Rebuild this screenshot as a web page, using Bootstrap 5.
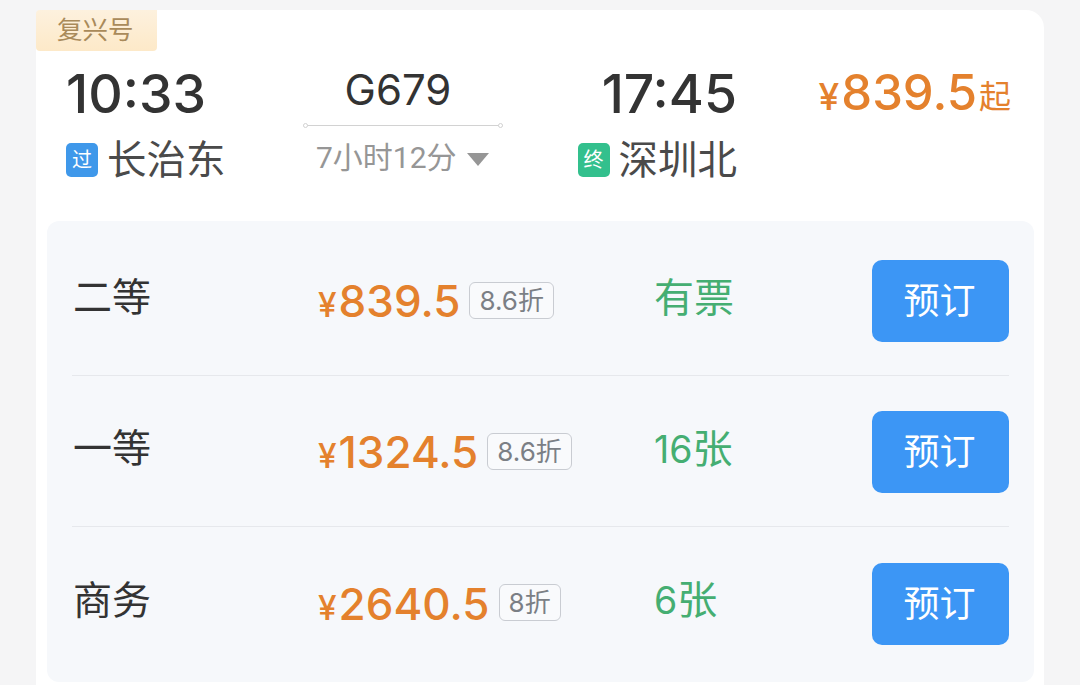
<!DOCTYPE html>
<html lang="zh-CN">
<head>
<meta charset="utf-8">
<title>G679</title>
<link rel="stylesheet" href="https://cdn.jsdelivr.net/npm/bootstrap@5.3.0/dist/css/bootstrap.min.css">
<style>
html,body{height:685px;overflow:hidden}
body{background:#f5f5f6;font-family:Inter,"Noto Sans CJK SC",sans-serif;color:#333}
.sheet{margin:10px 36px 0;width:1008px;height:690px;background:#fff;border-radius:18px 18px 0 0;position:relative}
.ribbon{position:absolute;left:0;top:0;width:121px;height:41px;background:linear-gradient(180deg,#fdf1de,#fde9c8);color:#a98a5a;font-size:25.5px;line-height:40px;padding-left:21px;border-radius:4px 0 4px 4px}
.head{padding:51px 0 0 30px;height:211px}
.c-dep{width:237px}
.c-mid{width:200px}
.c-arr{width:234px}
.c-price{width:274px}
.clock{font-size:53.5px;line-height:66px;font-weight:500;color:#333}
.place{font-size:39.5px;line-height:54px;color:#4a4a4a;margin-top:6px}
.tag{width:32px;height:34px;border-radius:5px;color:#fff;font-size:20px;line-height:34px;text-align:center;margin-right:9px}
.tag-blue{background:#3f98ea}
.tag-green{background:#33c08d}
.train{font-size:42px;line-height:50px;color:#333;text-align:center;margin-top:4px;padding-right:10px}
.rail{height:1px;background:#d2d2d2;margin-top:10px;position:relative}
.rail::before,.rail::after{content:"";position:absolute;top:-2px;width:5px;height:5px;border:1px solid #d2d2d2;background:#fff;border-radius:50%}
.rail::before{left:0}.rail::after{right:0}
.span-time{font-size:30px;line-height:42px;color:#969696;margin-top:11px;padding-left:13px;font-family:Roboto,"Noto Sans CJK SC",sans-serif}
.caret{width:0;height:0;border-left:11px solid transparent;border-right:11px solid transparent;border-top:13px solid #969696;margin-left:10px;margin-top:3px}
.fare{color:#e4812d;font-weight:500}
.fare-top{font-size:49px;line-height:60px;margin-top:2px}
.yen{font-size:.76em;margin-right:2px}
.qi{font-size:32px;font-weight:400;margin-left:2px;position:relative;top:-2px}
.panel{margin:0 10px 0 11px;height:461px;background:#f6f8fb;border-radius:12px;padding:4px 25px 0}
.seat{height:151px;border-bottom:1px solid #e6e8ec}
.seat:last-child{border-bottom:0}
.seat-name{width:244px;font-size:39px;color:#333;margin-top:-5px;padding-left:1px}
.seat-fare{width:338px;font-size:44px;line-height:1;padding-left:2px}
.seat-fare>span:first-child{margin-top:2px}
.off{font-size:26px;font-weight:400;color:#7b7f85;border:1.5px solid #c9ccd2;border-radius:6px;line-height:35px;padding:0 9px;margin-left:9px;background:#f9fafc}
.stock{width:217px;font-size:37.5px;color:#45ae72;margin-top:-5px}
.stock-cn{font-size:40px}
.go{width:137px;height:82px;background:#3c96f5;border:0;border-radius:10px;color:#fff;font-size:36px;padding:0 2px 0 0;margin:2px -1px 0 1px}
</style>
</head>
<body>
<div class="sheet">
  <div class="ribbon">复兴号</div>
  <div class="head d-flex">
    <div class="c-dep">
      <div class="clock">10:33</div>
      <div class="place d-flex align-items-center"><span class="tag tag-blue">过</span>长治东</div>
    </div>
    <div class="c-mid">
      <div class="train">G679</div>
      <div class="rail"></div>
      <div class="span-time d-flex align-items-center">7小时12分<span class="caret"></span></div>
    </div>
    <div class="c-arr d-flex flex-column align-items-end">
      <div class="clock">17:45</div>
      <div class="place d-flex align-items-center"><span class="tag tag-green">终</span>深圳北</div>
    </div>
    <div class="c-price text-end">
      <div class="fare fare-top"><span class="yen">¥</span>839.5<span class="qi">起</span></div>
    </div>
  </div>
  <div class="panel">
    <div class="seat d-flex align-items-center">
      <div class="seat-name">二等</div>
      <div class="seat-fare fare d-flex align-items-center"><span><span class="yen">¥</span>839.5</span><span class="off">8.6折</span></div>
      <div class="stock"><span class="stock-cn">有票</span></div>
      <button class="go btn">预订</button>
    </div>
    <div class="seat d-flex align-items-center">
      <div class="seat-name">一等</div>
      <div class="seat-fare fare d-flex align-items-center"><span><span class="yen">¥</span>1324.5</span><span class="off">8.6折</span></div>
      <div class="stock">16<span class="stock-cn">张</span></div>
      <button class="go btn">预订</button>
    </div>
    <div class="seat d-flex align-items-center">
      <div class="seat-name">商务</div>
      <div class="seat-fare fare d-flex align-items-center"><span><span class="yen">¥</span>2640.5</span><span class="off">8折</span></div>
      <div class="stock">6<span class="stock-cn">张</span></div>
      <button class="go btn">预订</button>
    </div>
  </div>
</div>
</body>
</html>
